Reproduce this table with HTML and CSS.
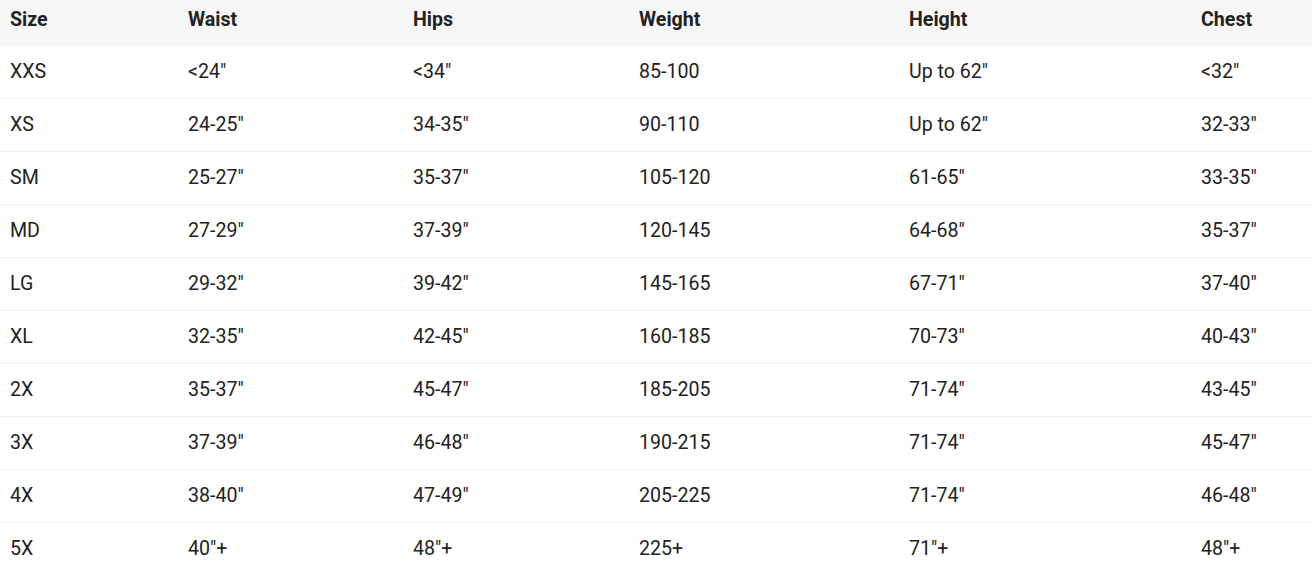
FILE: index.html
```html
<!DOCTYPE html>
<html>
<head>
<meta charset="utf-8">
<link rel="stylesheet" href="styles.css">
</head>
<body>
<table class="size-table">
  <colgroup>
    <col class="c1"><col class="c2"><col class="c3"><col class="c4"><col class="c5"><col class="c6">
  </colgroup>
  <thead>
    <tr><th>Size</th><th>Waist</th><th>Hips</th><th>Weight</th><th>Height</th><th>Chest</th></tr>
  </thead>
  <tbody>
    <tr><td>XXS</td><td>&lt;24"</td><td>&lt;34"</td><td>85-100</td><td>Up to 62"</td><td>&lt;32"</td></tr>
    <tr><td>XS</td><td>24-25"</td><td>34-35"</td><td>90-110</td><td>Up to 62"</td><td>32-33"</td></tr>
    <tr><td>SM</td><td>25-27"</td><td>35-37"</td><td>105-120</td><td>61-65"</td><td>33-35"</td></tr>
    <tr><td>MD</td><td>27-29"</td><td>37-39"</td><td>120-145</td><td>64-68"</td><td>35-37"</td></tr>
    <tr><td>LG</td><td>29-32"</td><td>39-42"</td><td>145-165</td><td>67-71"</td><td>37-40"</td></tr>
    <tr><td>XL</td><td>32-35"</td><td>42-45"</td><td>160-185</td><td>70-73"</td><td>40-43"</td></tr>
    <tr><td>2X</td><td>35-37"</td><td>45-47"</td><td>185-205</td><td>71-74"</td><td>43-45"</td></tr>
    <tr><td>3X</td><td>37-39"</td><td>46-48"</td><td>190-215</td><td>71-74"</td><td>45-47"</td></tr>
    <tr><td>4X</td><td>38-40"</td><td>47-49"</td><td>205-225</td><td>71-74"</td><td>46-48"</td></tr>
    <tr><td>5X</td><td>40"+</td><td>48"+</td><td>225+</td><td>71"+</td><td>48"+</td></tr>
  </tbody>
</table>
</body>
</html>
```
FILE: styles.css
```css
html, body {
  margin: 0;
  padding: 0;
  background: #ffffff;
}
body {
  font-family: Roboto, "Liberation Sans", sans-serif;
  color: #222222;
  overflow: hidden;
}
.size-table {
  width: 1312px;
  border-collapse: collapse;
  table-layout: fixed;
  font-size: 19.6px;
}
.c1 { width: 178px; }
.c2 { width: 225px; }
.c3 { width: 226px; }
.c4 { width: 270px; }
.c5 { width: 292px; }
.c6 { width: 121px; }
.size-table thead tr {
  background: #f7f7f7;
}
.size-table th {
  text-align: left;
  font-weight: 700;
  line-height: 22px;
  padding: 9px 10px 15px;
}
.size-table td {
  line-height: 22px;
  padding: 15px 10px;
  border-bottom: 1px solid #ededed;
  white-space: nowrap;
}
```
